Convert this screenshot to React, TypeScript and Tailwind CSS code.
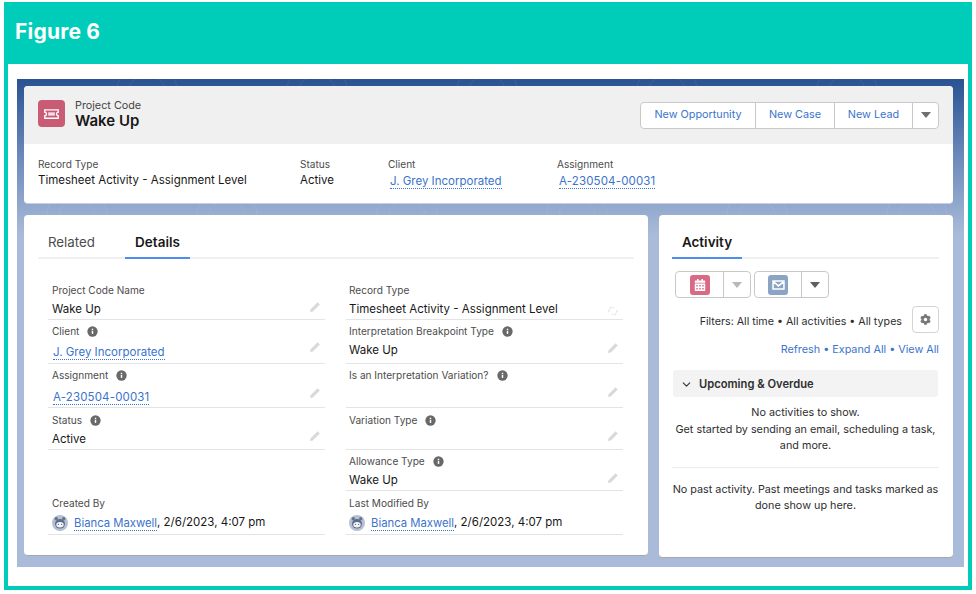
import React from "react";
import { FaCog, FaCalendarAlt } from "react-icons/fa";
import { ChevronDown } from "lucide-react";

const Pencil = ({ shift }: { shift: string }) => (
  <svg viewBox="0 0 12 12" className={`w-[12px] h-[12px] shrink-0 ${shift}`}>
    <path d="M8.6 1.2l2.2 2.2-7 7L1 11l.6-2.8z" fill="#d9d9d9" />
  </svg>
);

const Info = () => (
  <svg viewBox="0 0 12 12" className="w-[11px] h-[11px] shrink-0">
    <circle cx="6" cy="6" r="5.6" fill="#686868" />
    <rect x="5.2" y="5.2" width="1.6" height="3.4" fill="#fff" />
    <rect x="5.2" y="3" width="1.6" height="1.4" fill="#fff" />
  </svg>
);

const Caret = ({ color, lift = "" }: { color: string; lift?: string }) => (
  <svg viewBox="0 0 10 6" className={`w-[10px] h-[6px] ${lift}`}>
    <path d="M0 0h10L5 6z" fill={color} />
  </svg>
);

const Avatar = () => (
  <svg viewBox="0 0 16 16" className="w-[16px] h-[16px] shrink-0">
    <circle cx="8" cy="8" r="8" fill="#b5c0d3" />
    <circle cx="4.300" cy="3.800" r="1.700" fill="#66758f" />
    <circle cx="11.700" cy="3.800" r="1.700" fill="#66758f" />
    <ellipse cx="8" cy="8.800" rx="5" ry="4.800" fill="#5d6c88" />
    <ellipse cx="8" cy="9.800" rx="3.700" ry="2.700" fill="#f2f4f8" />
    <circle cx="6.400" cy="9.400" r=".6" fill="#5d6c88" />
    <circle cx="9.600" cy="9.400" r=".6" fill="#5d6c88" />
  </svg>
);

const LinkText = ({ children }: { children: React.ReactNode }) => (
  <span className="text-[#3a74cc] border-b border-dotted border-[#3a74cc] leading-[13px]">{children}</span>
);

type FieldProps = {
  label: string;
  info?: boolean;
  value?: React.ReactNode;
  h: string;
  pad: string;
  valueBox: string;
  shift?: string;
  edit?: "pencil" | "lock" | "none";
};

const Field = ({ label, info, value, h, pad, valueBox, shift = "", edit = "pencil" }: FieldProps) => (
  <div className={`${h} flex flex-col justify-end border-b border-[#e4e4e4]`}>
    <div className={`flex items-center gap-[8px] ${pad} text-[10.1px] leading-[14px] text-[#4c4c4c]`}>
      <span>{label}</span>
      {info && <Info />}
    </div>
    <div className={`flex items-center justify-between ${valueBox} -mb-[1px] ${pad} pr-[4px] text-[11.5px] text-[#181818]`}>
      <div className="flex items-center pt-[2px]">{value}</div>
      {edit === "pencil" && <Pencil shift={shift} />}
      {edit === "lock" && (
        <svg viewBox="0 0 12 12" className="w-[12px] h-[12px] mt-[4px]">
          <path d="M2 7V4.500L4 2.500h3M10 5v2.500L8 9.500H5" fill="none" stroke="#e8e8e8" strokeWidth="1.600" strokeDasharray="2.500 1" />
        </svg>
      )}
    </div>
  </div>
);

const Creator = () => (
  <div className="flex items-center gap-[6px]">
    <Avatar />
    <span className="flex items-center">
      <span className="mt-[2px] flex text-[11.3px]">
        <LinkText>Bianca Maxwell</LinkText>
      </span>
      <span>, 2/6/2023, 4:07 pm</span>
    </span>
  </div>
);

const HeaderButton = ({ children, w }: { children: React.ReactNode; w: string }) => (
  <div className={`${w} h-full flex items-center justify-center border-r border-[#c9c9c9] text-[#3a74cc] text-[10.8px]`}>
    {children}
  </div>
);

const HeaderMeta = ({ label, w, children }: { label: string; w: string; children: React.ReactNode }) => (
  <div className={`${w} flex flex-col`}>
    <span className="text-[10.1px] leading-[14px] text-[#4c4c4c]">{label}</span>
    <span className="mt-[2px] text-[11.5px] leading-[15px] text-[#181818]">{children}</span>
  </div>
);

const contours = [60, 130, 210, 300, 390, 470, 560, 650, 740, 830, 900];

export default function App() {
  return (
    <div
      className="w-[976px] h-[594px] bg-white pt-[2px] px-[4px] pb-[4px] flex flex-col overflow-hidden"
      style={{ fontFamily: "Inter, 'Noto Sans', sans-serif" }}
    >
      <div className="h-[62px] bg-[#00cdb9] flex items-center pl-[11px] shrink-0">
        <span className="text-white text-[21px] font-bold tracking-[0.2px] pb-[2px]">Figure 6</span>
      </div>
      <div className="flex-1 border-x-4 border-b-4 border-[#00cdb9] bg-white pt-[15px] pl-[9px] pr-[4px] pb-[19px]">
        <div className="relative overflow-hidden w-[947px] h-[488px] bg-[linear-gradient(180deg,#2a5291_0%,#6c8abb_16%,#a9bbd8_32%,#a9bbd8_100%)] pt-[7px] pl-[7px] pr-[11px]">
          <svg className="absolute left-0 top-0 w-[947px] h-[488px]" viewBox="0 0 947 488">
            {contours.map((x, i) => (
              <g key={x} fill="none" stroke="#fff" strokeOpacity=".09" strokeWidth=".8">
                <ellipse cx={x} cy={i % 2 ? 10 : 135} rx="30" ry="22" />
                <ellipse cx={x} cy={i % 2 ? 10 : 135} rx="18" ry="13" />
              </g>
            ))}
          </svg>
          <div className="relative">
            {/* Record header */}
            <div className="h-[118px] rounded-[4px] bg-white border-b border-[#c7cede] overflow-hidden">
              <div className="h-[58px] bg-[#f0f0f0] flex items-center justify-between pl-[14px] pr-[14px] pb-[3px]">
                <div className="flex items-center gap-[10px]">
                  <div className="w-[27px] h-[27px] rounded-[4px] bg-[#c95b74] flex items-center justify-center">
                    <svg viewBox="0 0 18 12" className="w-[15px] h-[10px]">
                      <path d="M1 1h16v3a2 2 0 0 0 0 4v3H1V8a2 2 0 0 0 0-4z" fill="none" stroke="#fff" strokeWidth="1.700" />
                      <rect x="5" y="4" width="8" height="4" fill="#fff" fillOpacity=".8" />
                    </svg>
                  </div>
                  <div className="flex flex-col mt-[2px]">
                    <span className="text-[10.8px] leading-[13px] text-[#444]">Project Code</span>
                    <span className="text-[15px] leading-[18px] font-semibold text-[#181818]">Wake Up</span>
                  </div>
                </div>
                <div className="h-[27px] mt-[4px] flex items-center rounded-[4px] border border-[#c9c9c9] bg-white">
                  <HeaderButton w="w-[115px]">New Opportunity</HeaderButton>
                  <HeaderButton w="w-[79px]">New Case</HeaderButton>
                  <HeaderButton w="w-[78px]">New Lead</HeaderButton>
                  <div className="w-[25px] flex items-center justify-center">
                    <Caret color="#6f6f6f" lift="mb-[2px]" />
                  </div>
                </div>
              </div>
              <div className="flex pl-[14px] pt-[13px]">
                <HeaderMeta label="Record Type" w="w-[262px]">Timesheet Activity - Assignment Level</HeaderMeta>
                <HeaderMeta label="Status" w="w-[88px]">Active</HeaderMeta>
                <HeaderMeta label="Client" w="w-[169px]">
                  <span className="ml-[2px] inline-block translate-y-[1px]"><LinkText>J. Grey Incorporated</LinkText></span>
                </HeaderMeta>
                <HeaderMeta label="Assignment" w="w-[120px]">
                  <span className="ml-[2px] inline-block translate-y-[1px] tracking-[0.15px]"><LinkText>A-230504-00031</LinkText></span>
                </HeaderMeta>
              </div>
            </div>

            <div className="flex gap-[11px] mt-[11px] items-start">
              {/* Details */}
              <div className="w-[624px] h-[341px] rounded-[4px] bg-white border-b border-[#a8a8a8] px-[14px]">
                <div className="h-[44px] flex items-end border-b-2 border-[#f0f0f0] w-[596px]">
                  <div className="w-[87px] h-[44px] pl-[10px] flex items-center pt-[12px] text-[13.3px] text-[#4c4c4c] -mb-[2px]">Related</div>
                  <div className="w-[65px] h-[44px] flex items-center justify-center pt-[12px] text-[13.5px] font-semibold text-[#181818] border-b-2 border-[#4d8cf0] -mb-[2px]">
                    Details
                  </div>
                </div>
                <div className="grid grid-cols-2 gap-x-[21px] w-[575px] ml-[10px] mt-[15px]">
                  <div className="flex flex-col">
                    <Field pad="pl-[4px]" h="h-[46px]" valueBox="h-[22px] mt-[1px]" shift="mb-[5px]" label="Project Code Name" value="Wake Up" />
                    <Field pad="pl-[4px]" h="h-[44px]" valueBox="h-[24px] mt-[2px]" shift="mb-[10px]" label="Client" info value={<span className="ml-[1px]"><LinkText>J. Grey Incorporated</LinkText></span>} />
                    <Field pad="pl-[4px]" h="h-[44px]" valueBox="h-[22px] mt-[4px]" shift="mb-[8px]" label="Assignment" info value={<span className="ml-[1px] tracking-[0.15px]"><LinkText>A-230504-00031</LinkText></span>} />
                    <Field pad="pl-[4px]" h="h-[42px]" valueBox="h-[22px] mt-[1px]" shift="mb-[6px]" label="Status" info value="Active" />
                    <Field pad="pl-[4px]" h="h-[85px]" valueBox="h-[26px] -mt-[1px]" label="Created By" edit="none" value={<Creator />} />
                  </div>
                  <div className="flex flex-col">
                    <Field pad="pl-[3px]" h="h-[46px]" valueBox="h-[22px] mt-[1px]" label="Record Type" edit="lock" value="Timesheet Activity - Assignment Level" />
                    <Field pad="pl-[3px]" h="h-[44px]" valueBox="h-[28px] -mt-[2px]" shift="mb-[4px]" label="Interpretation Breakpoint Type" info value="Wake Up" />
                    <Field pad="pl-[3px]" h="h-[44px]" valueBox="h-[26px]" shift="mb-[6px]" label="Is an Interpretation Variation?" info />
                    <Field pad="pl-[3px]" h="h-[42px]" valueBox="h-[22px] mt-[1px]" shift="mb-[6px]" label="Variation Type" info />
                    <Field pad="pl-[3px]" h="h-[41px]" valueBox="h-[22px] mt-[1px]" shift="mb-[4px]" label="Allowance Type" info value="Wake Up" />
                    <Field pad="pl-[3px]" h="h-[44px]" valueBox="h-[26px] -mt-[1px]" label="Last Modified By" edit="none" value={<Creator />} />
                  </div>
                </div>
              </div>

              {/* Activity */}
              <div className="w-[295px] h-[343px] rounded-[4px] bg-white border-b border-[#a8a8a8] pl-[13px] pr-[14px] text-[10.7px] text-[#2e2e2e]">
                <div className="h-[44px] border-b-2 border-[#f0f0f0] flex">
                  <div className="w-[70px] h-[44px] pt-[12px] flex items-center justify-center text-[13.5px] font-semibold text-[#181818] border-b-2 border-[#4d8cf0]">
                    Activity
                  </div>
                </div>
                <div className="flex gap-[3px] mt-[12px] ml-[3px]">
                  <div className="w-[76px] h-[27px] flex rounded-[4px] border border-[#c9c9c9]">
                    <div className="w-[48px] flex items-center justify-center border-r border-[#c9c9c9]">
                      <div className="w-[20px] h-[20px] rounded-[3px] bg-[#d96a86] flex items-center justify-center">
                        <FaCalendarAlt className="w-[12px] h-[12px] text-white" />
                      </div>
                    </div>
                    <div className="flex-1 flex items-center justify-center">
                      <Caret color="#b8b8b8" />
                    </div>
                  </div>
                  <div className="w-[75px] h-[27px] flex rounded-[4px] border border-[#c9c9c9]">
                    <div className="w-[47px] flex items-center justify-center border-r border-[#c9c9c9]">
                      <div className="w-[20px] h-[20px] rounded-[3px] bg-[#8ca4c4] flex items-center justify-center">
                        <svg viewBox="0 0 14 11" className="w-[13px] h-[10px]">
                          <path d="M1 1h12v9H1zM1 1.500L7 6.500 13 1.500" fill="none" stroke="#fff" strokeWidth="1.700" />
                        </svg>
                      </div>
                    </div>
                    <div className="flex-1 flex items-center justify-center">
                      <Caret color="#5f5f5f" />
                    </div>
                  </div>
                </div>
                <div className="flex items-center justify-end mt-[8px] gap-[10px]">
                  <span className="pt-[5px]">Filters: All time • All activities • All types</span>
                  <div className="w-[27px] h-[27px] rounded-[4px] border border-[#d4d4d4] flex items-center justify-center">
                    <FaCog className="w-[11px] h-[11px] text-[#777]" />
                  </div>
                </div>
                <div className="flex justify-end mt-[9px] text-[#3a74cc] text-[10.8px] leading-[16px]">
                  Refresh • Expand All • View All
                </div>
                <div className="h-[27px] mt-[12px] pt-[1px] rounded-[3px] bg-[#f3f3f3] flex items-center gap-[6px] pl-[7px] ml-[1px] mr-[1px] text-[11.2px] font-semibold text-[#2e2e2e]">
                  <ChevronDown className="w-[13px] h-[13px] text-[#333]" strokeWidth={2} />
                  Upcoming &amp; Overdue
                </div>
                <div className="text-center text-[10.8px] leading-[16.5px] mt-[8px] whitespace-nowrap">
                  No activities to show.
                  <br />
                  Get started by sending an email, scheduling a task,
                  <br />
                  and more.
                </div>
                <div className="mt-[12px] border-t border-[#ececec] pt-[14px] text-center text-[10.8px] leading-[16.5px] whitespace-nowrap">
                  No past activity. Past meetings and tasks marked as
                  <br />
                  done show up here.
                </div>
              </div>
            </div>
          </div>
        </div>
      </div>
    </div>
  );
}
